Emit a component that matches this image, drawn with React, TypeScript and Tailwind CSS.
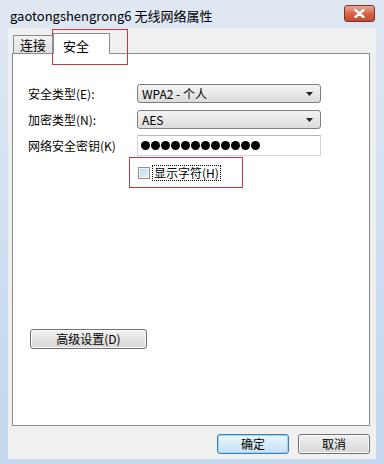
import { ReactNode } from "react";

const cjk = "font-['SimSun','Noto_Sans_CJK_SC',sans-serif]";

const Combo = ({ children }: { children: ReactNode }) => (
  <div className="flex items-center justify-between h-[19px] w-[184px] rounded-[3px] border border-[#7e7f80] bg-gradient-to-b from-[#f4f4f4] to-[#dcdcdc] pl-[4px] pr-[7px]">
    <span className="text-[12px] leading-none text-black">{children}</span>
    <svg width="7" height="4" viewBox="0 0 7 4">
      <path d="M0 0h7L3.5 4z" fill="#222" />
    </svg>
  </div>
);

const Btn = ({ children, focus }: { children: ReactNode; focus?: boolean }) => (
  <button
    className={
      "h-[20px] w-[72px] rounded-[3px] border text-[12px] leading-none text-black bg-gradient-to-b " +
      (focus
        ? "border-[#3c7fb1] from-[#eaf6fd] to-[#c5e2f3] shadow-[inset_0_0_0_1px_#9ed4f0]"
        : "border-[#707070] from-[#f2f2f2] to-[#d6d6d6] shadow-[inset_0_0_0_1px_#fcfcfc]")
    }
  >
    {children}
  </button>
);

export default function App() {
  return (
    <div className={"relative w-[384px] h-[464px] flex flex-col bg-gradient-to-b from-[#dfe8f3] to-[#c3d7ee] " + cjk}>
      <div className="h-[28px] flex items-center justify-between pl-[10px] pr-[9px] pt-[3px]">
        <span className="text-[13px] text-black">gaotongshengrong6 无线网络属性</span>
        <div className="flex items-center justify-center w-[31px] h-[17px] -mt-[4px] rounded-[3px] border border-[#7b3426] bg-gradient-to-b from-[#e9a99a] via-[#d6654a] to-[#c24a31]">
          <svg width="11" height="9" viewBox="0 0 11 9">
            <path d="M1.5 1l8 7M9.5 1l-8 7" stroke="#fff" strokeWidth="2.4" strokeLinecap="round" />
          </svg>
        </div>
      </div>

      <div className="flex-1 mx-[8px] mb-[5px] bg-[#f0f0f0] flex flex-col px-[4px] pt-[5px]">
        <div className="flex items-end h-[20px] pl-[1px] relative z-10">
          <div className="h-[18px] w-[40px] border border-b-0 border-[#898c95] bg-gradient-to-b from-[#f3f3f3] to-[#e0e0e0] flex items-center justify-center text-[13px] text-black">
            连接
          </div>
          <div className="h-[21px] w-[57px] -mb-[1px] border border-b-0 border-[#898c95] bg-white flex items-start pl-[9px] pt-[2px] text-[13px] text-black">
            安全
          </div>
        </div>

        <div className="h-[373px] w-[358px] border border-[#898c95] bg-white flex flex-col pl-[15px] pt-[30px]">
          <div className="flex items-center h-[19px]">
            <span className="w-[109px] text-[12px] text-black">安全类型(E):</span>
            <Combo>WPA2 - 个人</Combo>
          </div>
          <div className="flex items-center h-[19px] mt-[7px]">
            <span className="w-[109px] text-[12px] text-black">加密类型(N):</span>
            <Combo>AES</Combo>
          </div>
          <div className="flex items-center h-[21px] mt-[6px]">
            <span className="w-[109px] text-[12px] text-black">网络安全密钥(K)</span>
            <div className="h-[21px] w-[184px] border border-[#d4d4d4] border-t-[#b5b5b5] flex items-center gap-[1px] pl-[3px]">
              {Array.from({ length: 12 }).map((_, i) => (
                <span key={i} className="w-[9px] h-[9px] rounded-full bg-black" />
              ))}
            </div>
          </div>
          <div className="flex items-center h-[31px] pl-[110px] mt-[1px]">
            <div className="flex items-center gap-[2px]">
              <span className="w-[12px] h-[12px] border border-[#8e8f8f] bg-gradient-to-br from-[#b9d7ef] to-[#e6f2fb] shadow-[inset_0_0_0_1px_#f4f4f4]" />
              <span className="text-[12px] leading-[14px] text-black border border-dotted border-black px-[1px]">显示字符(H)</span>
            </div>
          </div>
          <div className="mt-[137px] ml-[2px]">
            <button className="h-[20px] w-[117px] rounded-[3px] border border-[#707070] bg-gradient-to-b from-[#f2f2f2] to-[#d6d6d6] shadow-[inset_0_0_0_1px_#fcfcfc] text-[12px] leading-none text-black">
              高级设置(D)
            </button>
          </div>
        </div>

        <div className="flex justify-end gap-[9px] pt-[8px] pr-[2px]">
          <Btn focus>确定</Btn>
          <Btn>取消</Btn>
        </div>
      </div>

      <div className="absolute left-[52px] top-[29px] w-[76px] h-[36px] border border-[#c3393d]" />
      <div className="absolute left-[129px] top-[157px] w-[114px] h-[31px] border border-[#c3393d]" />
    </div>
  );
}
